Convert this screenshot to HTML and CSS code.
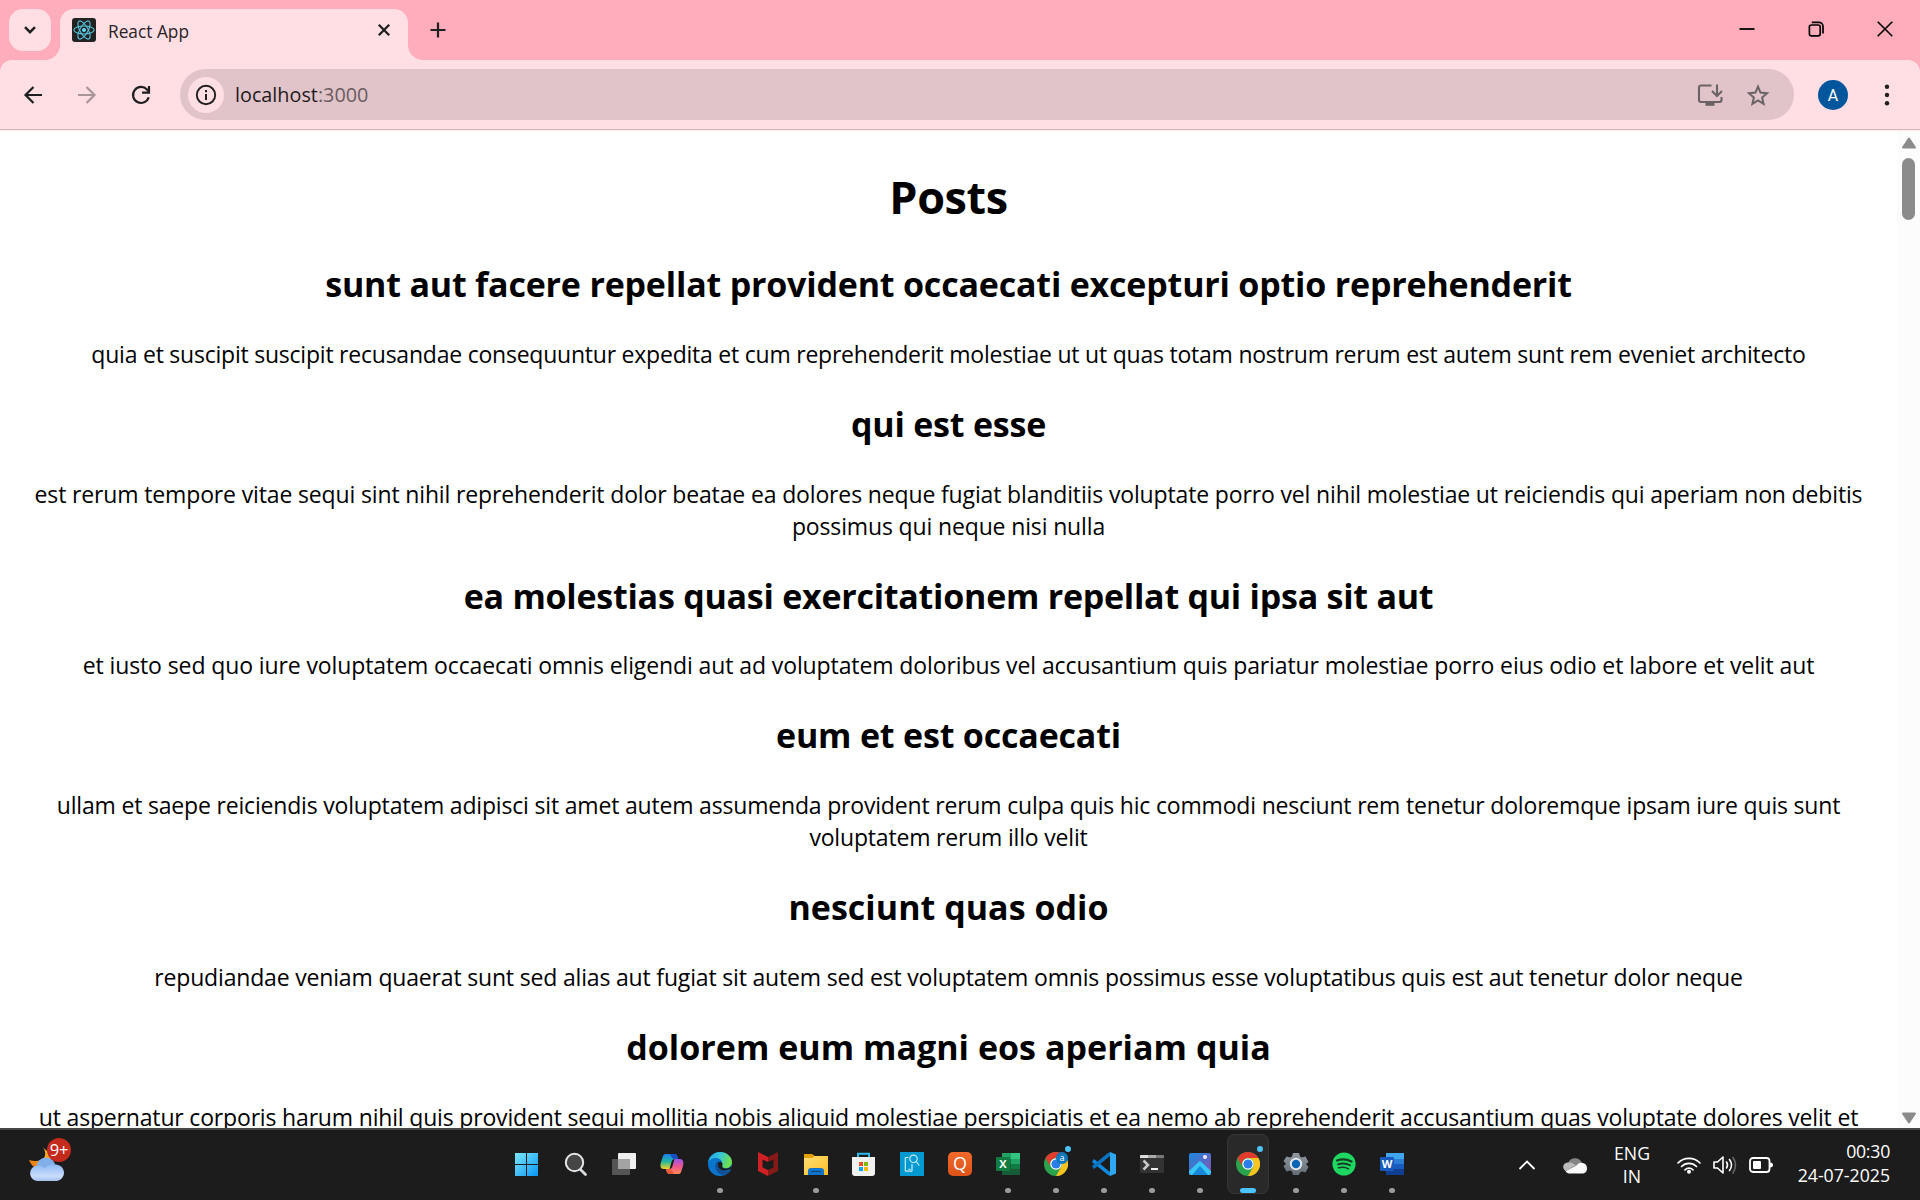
FILE: index.html
```html
<!DOCTYPE html>
<html lang="en">
<head>
<meta charset="utf-8">
<title>React App</title>
<link rel="stylesheet" href="styles.css">
</head>
<body>
<header class="tabstrip">
  <button class="tab-search" aria-label="Search tabs"><svg width="14" height="10" viewBox="0 0 14 10"><path d="M2 2.200l5 5 5-5" fill="none" stroke="#1f1f1f" stroke-width="2.400"/></svg></button>
  <div class="tab">
    <svg class="favicon" width="24" height="24" viewBox="0 0 24 24"><rect width="24" height="24" rx="3" fill="#222"/><g fill="none" stroke="#58c4dc" stroke-width="1.100"><ellipse cx="12" cy="12" rx="10.200" ry="4"/><ellipse cx="12" cy="12" rx="10.200" ry="4" transform="rotate(60 12 12)"/><ellipse cx="12" cy="12" rx="10.200" ry="4" transform="rotate(120 12 12)"/></g><circle cx="12" cy="12" r="2" fill="#61dafb"/></svg>
    <span class="tab-title">React App</span>
    <svg class="tab-close" width="14" height="14" viewBox="0 0 14 14"><path d="M1.800 1.800l10.400 10.400M12.200 1.800L1.800 12.200" stroke="#1f1f1f" stroke-width="2.300"/></svg>
  </div>
  <svg class="new-tab" width="16" height="16" viewBox="0 0 16 16"><path d="M8 .5v15M.5 8h15" stroke="#1f1f1f" stroke-width="2.200"/></svg>
  <div class="window-buttons">
    <svg width="16" height="16" viewBox="0 0 16 16"><path d="M.5 8h15" stroke="#000" stroke-width="1.800"/></svg>
    <svg width="16" height="16" viewBox="0 0 16 16"><g fill="none" stroke="#000" stroke-width="1.700"><rect x="1.400" y="4" width="10.800" height="10.800" rx="2"/><path d="M3.800 1.400h7.200a4 4 0 0 1 4 4v7"/></g></svg>
    <svg width="16" height="16" viewBox="0 0 16 16"><path d="M.7.7l14.600 14.600M15.300.7L.7 15.300" stroke="#000" stroke-width="1.600"/></svg>
  </div>
</header>

<nav class="toolbar-frame"><div class="toolbar">
  <svg class="nav-icon" width="20" height="20" viewBox="0 0 20 20"><path d="M19 10H2.500M10.500 2L2.500 10l8 8" fill="none" stroke="#1f1f1f" stroke-width="2.200"/></svg>
  <svg class="nav-icon" width="20" height="20" viewBox="0 0 20 20"><path d="M1 10h16.500M9.500 2l8 8-8 8" fill="none" stroke="#a9969a" stroke-width="2.200"/></svg>
  <svg class="nav-icon" width="20" height="20" viewBox="0 0 20 20"><path d="M17.700 12.300A8 8 0 1 1 16 4.600L18 6.800" fill="none" stroke="#1f1f1f" stroke-width="2.200"/><path d="M18 1v6.700h-7" fill="none" stroke="#1f1f1f" stroke-width="2.200"/></svg>
  <div class="omnibox">
    <span class="site-info"><svg width="22" height="22" viewBox="0 0 22 22"><circle cx="11" cy="11" r="9.200" fill="none" stroke="#1f1f1f" stroke-width="1.900"/><path d="M11 10v6M11 6v2.200" stroke="#1f1f1f" stroke-width="2"/></svg></span>
    <span class="url">localhost<span class="port">:3000</span></span>
    <svg class="install" width="26" height="24" viewBox="0 0 26 24"><g fill="none" stroke="#6b6265" stroke-width="2.100"><path d="M14.500 2.500H4a2 2 0 0 0-2 2v12.500a2 2 0 0 0 2 2h18.500a2 2 0 0 0 2-2v-3"/><path d="M20 1.500v11M15 8l5 5 5-5"/></g><path d="M8.500 19h9v3.800h-9z" fill="#6b6265"/></svg>
    <svg class="star" width="24" height="24" viewBox="0 0 24 24"><path d="M12 3.600l2.500 6 6.500.6-4.900 4.300 1.500 6.400-5.600-3.400-5.600 3.400 1.500-6.400L3 10.200l6.500-.6z" fill="none" stroke="#6b6265" stroke-width="2"/></svg>
  </div>
  <span class="avatar">A</span>
  <svg class="menu" width="6" height="24" viewBox="0 0 6 24"><g fill="#1f1f1f"><circle cx="3" cy="3.800" r="2.200"/><circle cx="3" cy="12" r="2.200"/><circle cx="3" cy="20.200" r="2.200"/></g></svg>
</div></nav>

<div class="viewport">
  <main class="posts">
    <h1>Posts</h1>
    <article class="post post-1"><h2>sunt aut facere repellat provident occaecati excepturi optio reprehenderit</h2><p>quia et suscipit suscipit recusandae consequuntur expedita et cum reprehenderit molestiae ut ut quas totam nostrum rerum est autem sunt rem eveniet architecto</p></article>
    <article class="post post-2"><h2>qui est esse</h2><p>est rerum tempore vitae sequi sint nihil reprehenderit dolor beatae ea dolores neque fugiat blanditiis voluptate porro vel nihil molestiae ut reiciendis qui aperiam non debitis<br>possimus qui neque nisi nulla</p></article>
    <article class="post post-3"><h2>ea molestias quasi exercitationem repellat qui ipsa sit aut</h2><p>et iusto sed quo iure voluptatem occaecati omnis eligendi aut ad voluptatem doloribus vel accusantium quis pariatur molestiae porro eius odio et labore et velit aut</p></article>
    <article class="post post-4"><h2>eum et est occaecati</h2><p>ullam et saepe reiciendis voluptatem adipisci sit amet autem assumenda provident rerum culpa quis hic commodi nesciunt rem tenetur doloremque ipsam iure quis sunt<br>voluptatem rerum illo velit</p></article>
    <article class="post post-5"><h2>nesciunt quas odio</h2><p>repudiandae veniam quaerat sunt sed alias aut fugiat sit autem sed est voluptatem omnis possimus esse voluptatibus quis est aut tenetur dolor neque</p></article>
    <article class="post post-6"><h2>dolorem eum magni eos aperiam quia</h2><p>ut aspernatur corporis harum nihil quis provident sequi mollitia nobis aliquid molestiae perspiciatis et ea nemo ab reprehenderit accusantium quas voluptate dolores velit et</p></article>
  </main>
  <aside class="scrollbar">
    <svg width="16" height="12" viewBox="0 0 16 12"><path d="M8 1.500L14 10.500H2z" fill="#8b8b8b" stroke="#8b8b8b" stroke-width="2" stroke-linejoin="round"/></svg>
    <div class="thumb"></div>
    <svg class="down" width="16" height="12" viewBox="0 0 16 12"><path d="M8 10.500L14 1.500H2z" fill="#8b8b8b" stroke="#8b8b8b" stroke-width="2" stroke-linejoin="round"/></svg>
  </aside>
</div>

<footer class="taskbar">
  <svg width="0" height="0" class="defs"><defs>
    <linearGradient id="win" x1="0" y1="0" x2="1" y2="1"><stop offset="0" stop-color="#7be8fb"/><stop offset="1" stop-color="#0a95f5"/></linearGradient>
    <linearGradient id="cloud" x1="0" y1="0" x2="0" y2="1"><stop offset="0" stop-color="#8db9f3"/><stop offset=".7" stop-color="#c9dcfb"/><stop offset="1" stop-color="#a3c0ee"/></linearGradient>
    <linearGradient id="moon" x1="0" y1="1" x2="1" y2="0"><stop offset="0" stop-color="#e8710a"/><stop offset="1" stop-color="#fbc02d"/></linearGradient>
    <linearGradient id="copA" x1="0" y1="0" x2="0" y2="1"><stop offset="0" stop-color="#1b7df0"/><stop offset=".5" stop-color="#20b6a0"/><stop offset="1" stop-color="#f4d322"/></linearGradient>
    <linearGradient id="copB" x1="0" y1="0" x2="0" y2="1"><stop offset="0" stop-color="#9a55ec"/><stop offset=".5" stop-color="#f0568e"/><stop offset="1" stop-color="#fb8e55"/></linearGradient>
    <linearGradient id="edgeA" x1="0" y1="0" x2="1" y2=".3"><stop offset="0" stop-color="#1fa4e8"/><stop offset=".5" stop-color="#35c5dd"/><stop offset="1" stop-color="#6fe04c"/></linearGradient>
    <linearGradient id="folder" x1="0" y1="0" x2="1" y2="1"><stop offset="0" stop-color="#ffdf75"/><stop offset="1" stop-color="#fbbd25"/></linearGradient>
    <linearGradient id="photo" x1="0" y1="0" x2="1" y2="1"><stop offset="0" stop-color="#168be0"/><stop offset="1" stop-color="#8d4fb0"/></linearGradient>
    <linearGradient id="gear" x1="0" y1="0" x2="0" y2="1"><stop offset="0" stop-color="#9299a1"/><stop offset="1" stop-color="#646c75"/></linearGradient>
    <symbol id="chrome" viewBox="0 0 24 24"><circle cx="12" cy="12" r="12" fill="#2ba24c"/><path d="M1.600 6A12 12 0 0 1 22.400 6H12a6 6 0 0 0-5.200 9z" fill="#e33b2e"/><path d="M22.400 6A12 12 0 0 1 12 24L17.200 15A6 6 0 0 0 12 6z" fill="#fcc31e"/><circle cx="12" cy="12" r="5.800" fill="#fff"/><circle cx="12" cy="12" r="4.600" fill="#2b7de9"/></symbol>
  </defs></svg>
  <div class="weather">
    <svg width="38" height="34" viewBox="0 0 38 34"><path d="M14 0c5 8 2 17-14 13 2 5 5 8 10 8h12V6C19 5 16 3 14 0z" fill="url(#moon)"/><circle cx="17" cy="20" r="9.500" fill="#82aeea"/><path d="M8 34a7.800 7.800 0 0 1 0-15.500c4 0 6 1 7.500 3C19 17.500 22 17 27 17.500a8.300 8.300 0 0 1 1 16.500z" fill="url(#cloud)"/></svg>
    <span class="count">9+</span>
  </div>
  <div class="apps">
    <span class="app"><svg viewBox="0 0 24 24"><path d="M-1 1h11v11h-11zM11 1h11v11h-11zM-1 13h11v11h-11zM11 13h11v11h-11z" fill="url(#win)"/></svg></span>
    <span class="app"><svg viewBox="0 0 24 24"><path d="M16 17l5.500 5.500" stroke="#d8dce0" stroke-width="2.800" stroke-linecap="round"/><circle cx="10.500" cy="10.500" r="8.700" fill="#454545" stroke="#e4e6e8" stroke-width="2"/></svg></span>
    <span class="app"><svg viewBox="0 0 24 24"><rect x="6" y="1" width="18" height="16" rx="1" fill="#efefef"/><rect y="7" width="18" height="16" rx="1" fill="#555"/><path d="M6 7h12v10H6z" fill="#a3a3a3"/></svg></span>
    <span class="app"><svg viewBox="0 0 24 24"><path d="M6 2h8c2 0 3 1 3.500 3L18 7h-3c-2 0-3 1-3.500 3L9.500 17H4c-4 0-4-3-3-7l2-6c.5-1.400 1.500-2 3-2z" fill="url(#copA)"/><path d="M10 2h4c2 0 3 1 3.500 3L18 7h-3c-2 0-3-1-3.500-2z" fill="#184fc4"/><path d="M18 22h-8c-2 0-3-1-3.500-3L6 17h3c2 0 3-1 3.500-3l2-7H20c3 0 4 3 3 7l-2 6c-.5 1.400-1.500 2-3 2z" fill="url(#copB)"/><path d="M14 22h-4c-2 0-3-1-3.500-3L6 17h3c2 0 4 2 5 5z" fill="#f05a3c"/></svg></span>
    <span class="app open"><svg viewBox="0 0 24 24"><circle cx="12" cy="12" r="12" fill="#0b75cc"/><path d="M0 11C1 4 6 0 12 0c7 0 12 5 12 10 0 4-3 6-6 6-4 0-5-1-4-3 1-5-3-7-6-7-4 0-7 2-8 5z" fill="url(#edgeA)"/><path d="M8 11c-2 5 1 12 8 12 3-1 5-2 7-5-6 3-13 0-11-8-2-1-3 0-4 1z" fill="#114f96"/><path d="M10 12c0-3 5-3 4.500 1-1 3 2 4 5 3.500 2-.4 4-2 4-4v4c-6 4-14 2-13.500-4.500z" fill="#1c1c1c"/></svg></span>
    <span class="app"><svg viewBox="0 0 24 24"><path d="M2 0l10 5v5L6.500 7.500v8L12 18v6L2 19z" fill="#cf2024"/><path d="M22 0L12 5v5l5.500-2.500v8L12 18v6l10-5z" fill="#851a18"/></svg></span>
    <span class="app open"><svg viewBox="0 0 24 24"><path d="M0 2h8l3 2h11v5H0z" fill="#e4a000"/><path d="M0 6h8l3-2h13v19H0z" fill="url(#folder)"/><path d="M4 23v-4q0-3 3-3h10q3 0 3 3v4z" fill="#1274c9"/><path d="M7 19.500h10" stroke="#0a4384"/></svg></span>
    <span class="app"><svg viewBox="0 0 24 24"><path d="M6 6V1.800h11V6" fill="none" stroke="#2fb9ec" stroke-width="2"/><path d="M0 5h23v16q0 3-3 3H3q-3 0-3-3z" fill="#f1f1f1"/><path d="M7 10h4v4H7z" fill="#f25022"/><path d="M12 10h4v4h-4z" fill="#7fba00"/><path d="M7 15h4v4H7z" fill="#00a4ef"/><path d="M12 15h4v4h-4z" fill="#ffb900"/></svg></span>
    <span class="app"><svg viewBox="0 0 24 24"><path d="M0 0h24v24H0z" fill="#0499d0"/><g fill="none" stroke="#c8edf8" stroke-width="1.200"><path d="M8.500 5.500H6q-.7 0-.7.700V18.500q0 .7.700.7h5.300q.7 0 .7-.7V12"/><circle cx="13.500" cy="6.800" r="3.700"/><path d="M16.300 9.500l3 4M8.500 17.300h2"/></g></svg></span>
    <span class="app"><span class="quick">Q</span></span>
    <span class="app open"><svg viewBox="0 0 24 24"><path d="M6 1h9v6H6z" fill="#21a366"/><path d="M15 1h9v6h-9z" fill="#33c481"/><path d="M6 7h9v5H6z" fill="#107c41"/><path d="M15 7h9v5h-9z" fill="#21a366"/><path d="M6 12h18v11H6z" fill="#185c37"/><path d="M15 12h9v5h-9z" fill="#107c41"/><rect y="5" width="14" height="14" rx="1" fill="#107c41"/></svg><b class="letter">X</b></span>
    <span class="app open alert"><svg viewBox="0 0 24 24"><use href="#chrome"/></svg><i class="profile">a</i></span>
    <span class="app open"><svg viewBox="0 0 24 24"><path d="M2 7l16 13 1 4-3-1L0 10z" fill="#0d8ade"/><path d="M2 17L18 4l1-4-3 1L0 14z" fill="#0874c2"/><path d="M18 0l6 2.500v19L18 24z" fill="#2fa7f3"/></svg></span>
    <span class="app open"><svg viewBox="0 0 24 24"><rect y="3" width="24" height="18" rx="1" fill="#333"/><path d="M0 6V4q0-1 1-1h7v3z" fill="#ddd"/><path d="M8 3h8v3H8z" fill="#aaa"/><path d="M16 3h7q1 0 1 1v2h-8z" fill="#777"/><path d="M3.500 8.500l4.500 4.500-4.500 4.500" fill="none" stroke="#c9c9c9" stroke-width="2.500"/><path d="M11 17h7" stroke="#eee" stroke-width="2"/></svg></span>
    <span class="app open"><svg viewBox="0 0 24 24"><rect x="1" y="1" width="22" height="22" rx="2" fill="url(#photo)"/><path d="M1 19L10.500 10q1.500-1.300 3 0L23 19v2q0 2-2 2H3q-2 0-2-2z" fill="#36c7f4"/><path d="M12 14l8 9H4z" fill="#1687d9"/><circle cx="17" cy="5" r="2" fill="#f4e9f5"/></svg></span>
    <span class="app open alert active"><svg viewBox="0 0 24 24"><use href="#chrome"/></svg></span>
    <span class="app open"><svg viewBox="0 0 24 24"><path d="M9 1h6l1 3.500 2 1 3.500-1 3 5.500-2.500 2 2.500 3-3 5.500-3.500-1-2 1L15 23H9l-1-3.500-2-1-3.500 1L-.5 14 2 12-.5 9l3-4.500 3.500 1 2-1z" fill="url(#gear)"/><circle cx="12" cy="12" r="5.200" fill="#0865b5" stroke="#e2e5e8" stroke-width="2"/></svg></span>
    <span class="app open"><svg viewBox="0 0 24 24"><circle cx="12" cy="12" r="11.600" fill="#1ed760"/><g fill="none" stroke="#173b22" stroke-linecap="round"><path d="M5 8.500q7.500-2.500 14.500 1" stroke-width="2.200"/><path d="M6 12.300q6.500-2 12 1" stroke-width="1.800"/><path d="M6.500 15.800q5.500-1.500 10 1" stroke-width="1.500"/></g></svg></span>
    <span class="app open"><svg viewBox="0 0 24 24"><path d="M6 1h18v6H6z" fill="#41a5ee"/><path d="M6 7h18v5H6z" fill="#2b7cd3"/><path d="M6 12h18v5H6z" fill="#185abd"/><path d="M6 17h18v6H6z" fill="#103f91"/><rect y="5" width="14" height="14" rx="1" fill="#185abd"/></svg><b class="letter">W</b></span>
  </div>
  <div class="tray">
    <svg class="chevron" width="18" height="12" viewBox="0 0 18 12"><path d="M1.500 10L9 2.500l7.500 7.500" fill="none" stroke="#fff" stroke-width="1.800"/></svg>
    <svg class="onedrive" width="24" height="17" viewBox="0 0 24 17"><path d="M5 6a7.500 7.500 0 0 1 14 0l-4 4z" fill="#858585"/><path d="M5 5.500c3-.5 6 1 8 3L2.500 14C-1.500 10.500 0 6 5 5.500z" fill="#bbb"/><path d="M2.500 14l11-5.500c2-2.500 4-3 6-2.500 3.500.5 4.500 3 4.500 5.500 0 3-2 5-5 5H6c-1.500 0-2.700-1-3.500-2.500z" fill="#fafafa"/></svg>
    <div class="lang"><span>ENG</span><span>IN</span></div>
    <svg class="wifi" width="24" height="18" viewBox="0 0 24 18"><g fill="none" stroke="#fff" stroke-width="1.700" stroke-linecap="round"><path d="M1 7a15.500 15.500 0 0 1 22 0M4.500 10.500a10.600 10.600 0 0 1 15 0M8 13.800a5.700 5.700 0 0 1 8 0"/></g><circle cx="12" cy="15.800" r="2" fill="#fff"/></svg>
    <svg class="volume" width="24" height="20" viewBox="0 0 24 20"><g fill="none" stroke="#fff" stroke-width="1.600" stroke-linecap="round" stroke-linejoin="round"><path d="M1 7h3.500L10 2v16l-5.500-5H1z"/><path d="M13.500 7q2 3 0 6M16.500 4.500q4 5.500 0 11"/><path d="M20 2.500q5 7.500 0 15.500" stroke="#666"/></g></svg>
    <svg class="battery" width="24" height="16" viewBox="0 0 24 16"><rect x="1" y="1" width="19.500" height="14" rx="3" fill="none" stroke="#fff" stroke-width="1.800"/><rect x="4" y="4" width="8" height="8" rx="1" fill="#fff"/><path d="M21 5.500q3 .3 3 2.500t-3 2.500z" fill="#fff"/></svg>
    <div class="clock"><span class="time">00:30</span><span>24-07-2025</span></div>
  </div>
</footer>
</body>
</html>
```
FILE: styles.css
```css
* { box-sizing: border-box; }
body {
  margin: 0;
  width: 1920px;
  height: 1200px;
  overflow: hidden;
  display: flex;
  flex-direction: column;
  background: #fff;
  font-family: "Open Sans", "Noto Sans", sans-serif;
}
svg { display: block; flex: none; overflow: visible; }

/* Tab strip */
.tabstrip { height: 60px; background: #ffadbc; display: flex; align-items: flex-start; padding-left: 9px; flex: none; }
.tab-search { width: 42px; height: 42px; margin: 9px 9px 0 0; padding: 0; border: 0; border-radius: 14px; background: #ffdee4; display: grid; place-items: center; }
.tab { position: relative; width: 348px; height: 51px; margin-top: 9px; padding: 9px 17px 0 12px; display: flex; border-radius: 14px 14px 0 0; background: #ffdee4; }
.tab::before, .tab::after { content: ""; position: absolute; bottom: 0; width: 15px; height: 15px; }
.tab::before { right: 100%; background: radial-gradient(circle at 0 0, transparent 14.500px, #ffdee4 15.300px); }
.tab::after { left: 100%; background: radial-gradient(circle at 100% 0, transparent 14.500px, #ffdee4 15.300px); }
.tab-title { margin-left: 12px; font-size: 17.300px; line-height: 28px; color: #2a2325; flex: 1; }
.tab-close { margin-top: 5px; }
.new-tab { margin: 22px 0 0 22px; }
.window-buttons { margin: 21px 27px 0 auto; display: flex; gap: 53px; }

/* Toolbar */
.toolbar-frame { height: 71px; background: #ffadbc; flex: none; }
.toolbar { height: 71px; background: linear-gradient(#ffdee4 69px, #d3b7bd 69px, #d3b7bd 70px, #fdeaed 70px); border-radius: 12px 12px 0 0; display: flex; align-items: center; padding: 0 30px 2px 23px; }
.nav-icon { margin-right: 34px; }
.nav-icon + .omnibox { margin-left: -5px; }
.omnibox { width: 1614px; height: 51px; border-radius: 26px; background: #e0c4c9; display: flex; align-items: center; padding: 0 24px 0 8px; }
.site-info { width: 36px; height: 36px; border-radius: 50%; background: #ffdee4; display: grid; place-items: center; }
.url { margin-left: 11px; font-size: 19.800px; color: #1f1a1c; flex: 1; }
.port { color: #6b5c60; }
.star { margin-left: 23px; }
.avatar { width: 30px; height: 30px; margin-left: 24px; border-radius: 50%; background: #00569c; color: #fff; font: 16px/31px Roboto, sans-serif; text-align: center; }
.menu { margin-left: auto; }

/* Page */
.viewport { height: 997px; display: flex; overflow: hidden; flex: none; }
.posts { width: 1897px; padding: 1px 12px 0; text-align: center; color: #000; flex: none; }
h1 { margin: 32px 0; padding-top: 2px; font-size: 45px; line-height: 62px; letter-spacing: -.4px; }
h2 { margin: 29.880px 0; padding-top: 1px; font-size: 34px; line-height: 47px; white-space: nowrap; }
p { margin: 29.880px 0; font-size: 23px; line-height: 32px; white-space: nowrap; }
.post-1 h2 { letter-spacing: -.193px; }
.post-1 p { letter-spacing: -.226px; }
.post-2 h2 { letter-spacing: -.210px; }
.post-2 p { letter-spacing: -.144px; }
.post-3 h2 { letter-spacing: -.247px; }
.post-3 p { letter-spacing: -.104px; }
.post-4 h2 { letter-spacing: -.190px; }
.post-4 p { letter-spacing: -.185px; }
.post-5 h2 { letter-spacing: .030px; }
.post-5 p { letter-spacing: -.174px; }
.post-6 h2 { letter-spacing: .035px; }
.post-6 p { letter-spacing: -.173px; }

.scrollbar { width: 23px; background: #fcfcfc; display: flex; flex-direction: column; align-items: center; padding: 6px 0 4px; }
.thumb { width: 13px; height: 62px; margin-top: 9px; border-radius: 7px; background: #8b8b8b; }
.down { margin-top: auto; }

/* Taskbar */
.taskbar { height: 72px; border-top: 2px solid #464646; background: #1c1c1c; color: #fff; display: grid; grid-template-columns: 504px 912px 504px; flex: none; }
.defs { position: absolute; }
.weather { position: relative; padding: 17px 0 0 29px; }
.count { position: absolute; left: 47px; top: 8px; width: 24px; height: 24px; border-radius: 50%; background: #c42b1c; font-size: 16.500px; line-height: 23px; text-align: center; letter-spacing: -.3px; }
.apps { display: flex; }
.app { position: relative; width: 48px; height: 70px; display: grid; place-items: center; }
.app > svg { width: 24px; height: 24px; margin-bottom: 2px; }
.open::after { content: ""; position: absolute; left: 21px; top: 58px; width: 6px; height: 5px; border-radius: 3px; background: #9b9b9b; }
.alert::before { content: ""; position: absolute; left: 33px; top: 16px; width: 6px; height: 6px; border-radius: 50%; background: #4cc2ff; z-index: 1; }
.active { width: 42px; height: 60px; margin: 4px 3px 0; border-radius: 8px; background: #292929; box-shadow: inset 0 0 0 1px #363636; }
.active > svg { margin-bottom: 0; }
.active::before { left: 30px; top: 12px; }
.active::after { left: 13px; top: 54px; width: 16px; background: #4cc2ff; }
.quick { width: 24px; height: 24px; margin-bottom: 2px; border-radius: 5px; background: linear-gradient(#f36a2b, #dc5218); font: 18px/23px "Open Sans", sans-serif; text-align: center; }
.letter { position: absolute; left: 12px; top: 27px; width: 14px; font: 700 11px/14px "Open Sans", sans-serif; text-align: center; }
.profile { position: absolute; left: 24px; top: 22px; width: 12px; height: 12px; border-radius: 50%; background: #0b78bd; font: 9px/11px "Open Sans", sans-serif; text-align: center; }
.tray { display: flex; align-items: center; padding: 0 30px 0 102px; font-size: 17.700px; }
.onedrive { margin: 1px 0 0 27px; }
.lang { width: 50px; margin: 0 0 0 20px; display: grid; line-height: 23px; text-align: center; }
.wifi { margin-left: 20px; }
.volume { margin-left: 12px; }
.battery { margin-left: 12px; }
.clock { margin: -4px 0 0 auto; display: grid; line-height: 24px; text-align: right; }
.time { letter-spacing: -.25px; }
```
